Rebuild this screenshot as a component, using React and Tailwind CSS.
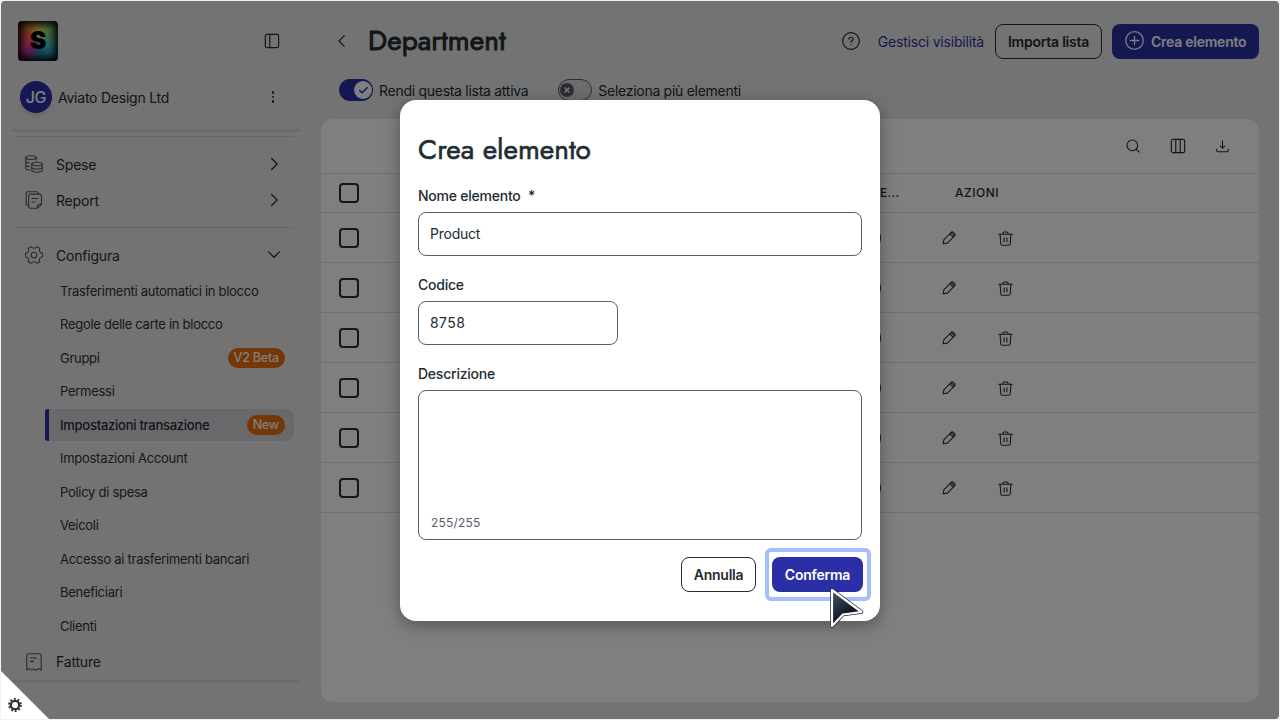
import { Search, Check, X } from "lucide-react";

const configura = [
  { label: "Trasferimenti automatici in blocco" },
  { label: "Regole delle carte in blocco" },
  { label: "Gruppi", badge: "V2 Beta" },
  { label: "Permessi" },
  { label: "Impostazioni transazione", badge: "New", attivo: true },
  { label: "Impostazioni Account" },
  { label: "Policy di spesa" },
  { label: "Veicoli" },
  { label: "Accesso ai trasferimenti bancari" },
  { label: "Beneficiari" },
  { label: "Clienti" },
];

const righe = [1, 2, 3, 4, 5, 6];

function Svg({ size = 18, className = "", sw = 1.2, children }) {
  return (
    <svg
      width={size}
      height={size}
      viewBox="0 0 18 18"
      fill="none"
      stroke="currentColor"
      strokeWidth={sw}
      strokeLinecap="round"
      strokeLinejoin="round"
      className={`shrink-0 ${className}`}
    >
      {children}
    </svg>
  );
}

function IconSpese() {
  return (
    <Svg className="text-[#50535a]" sw={1.1}>
      <ellipse cx="6" cy="2.6" rx="5.2" ry="1.9" />
      <path d="M.8 2.6v10.6c0 .9 1.6 1.6 4 1.8M.8 6.2c0 .8 1.3 1.5 3.6 1.8M.8 9.8c0 .8 1.3 1.5 3.6 1.8M11.2 2.6v2.6" />
      <ellipse cx="12" cy="9" rx="5.2" ry="1.8" />
      <path d="M6.8 9v6.3c0 1 2.3 1.9 5.2 1.9s5.2-.9 5.2-1.9V9M6.8 12.2c0 1 2.3 1.8 5.2 1.8s5.2-.8 5.2-1.8" />
    </Svg>
  );
}

function IconReport() {
  return (
    <Svg className="text-[#50535a]" sw={1.1}>
      <path d="M3.6 14.5H3A1.8 1.8 0 0 1 1.2 12.7V2.5A1.8 1.8 0 0 1 3 .7h8.6a1.8 1.8 0 0 1 1.8 1.8v.6" />
      <path d="M12.3 17.3H5.4a1.8 1.8 0 0 1-1.8-1.8V4.9a1.8 1.8 0 0 1 1.8-1.8h9.3a1.8 1.8 0 0 1 1.8 1.8v8.3zM12.3 17.3v-2.9c0-.7.5-1.2 1.2-1.2h3M7 7.5h6M7 11h3" />
    </Svg>
  );
}

function IconConfigura() {
  return (
    <Svg className="text-[#50535a]" sw={1.1}>
      <circle cx="9" cy="9" r="2.8" />
      <path d="M17.4 7.2Q13.5 6.4 14.75 2.6Q13.8 1 11.65.8Q9 3.8 6.35.8Q4.2 1 3.25 2.6Q4.5 6.4.6 7.2Q0 9 .6 10.8Q4.5 11.6 3.25 15.4Q4.2 17 6.35 17.2Q9 14.2 11.65 17.2Q13.8 17 14.75 15.4Q13.5 11.6 17.4 10.8Q18 9 17.4 7.2z" />
    </Svg>
  );
}

function IconFatture() {
  return (
    <Svg className="text-[#50535a]" sw={1.1}>
      <path d="M1.8 17V2.2A1.5 1.5 0 0 1 3.3.7h11.4a1.5 1.5 0 0 1 1.5 1.5V17c-.9 0-1.5-1.5-2.5-1.5-1.1 0-1.1 1.7-2.3 1.7s-1.3-1.2-2.4-1.2-1.2 1.2-2.4 1.2-1.3-1.7-2.3-1.7S2.7 17 1.8 17zM5.5 5h6M5.5 8.4h3" />
    </Svg>
  );
}

function Badge({ children }) {
  return (
    <span className="flex h-5 items-center rounded-full bg-[#ea6e0c] px-[6px] pt-px text-[12.5px] font-medium tracking-[-0.2px] text-white">
      {children}
    </span>
  );
}

function Voce({ icon, label, freccia }) {
  return (
    <div className="flex h-9 items-center pr-[19px] pl-[24px]">
      {icon}
      <span className="ml-[13px] flex-1 text-[14px] tracking-[-0.2px]">{label}</span>
      {freccia === "destra" && (
        <Svg size={14} sw={1.7}>
          <path d="M6 2l7 7-7 7" />
        </Svg>
      )}
      {freccia === "giu" && (
        <Svg size={14} sw={1.7}>
          <path d="M2 5l7 7 7-7" />
        </Svg>
      )}
    </div>
  );
}

function Sidebar() {
  return (
    <aside className="flex w-[299px] flex-col">
      <div className="mt-[20px] flex h-10 items-center justify-between pr-[20px] pl-[17px]">
        <div className="flex size-10 items-center justify-center overflow-hidden rounded-[4px] bg-[conic-gradient(from_0deg,#f4e45a,#6fe090_70deg,#45c5e8_120deg,#2b8fc0_170deg,#c03aa0_220deg,#ff4a80_260deg,#f8703a_310deg,#f4e45a)] shadow-[inset_0_0_9px_4px_#000]">
          <span className="mb-px font-[Inter,sans-serif] text-[25px] leading-none font-black text-black">
            S
          </span>
        </div>
        <Svg size={16} sw={1.3}>
          <rect x="1.5" y="1.5" width="15" height="15" rx="2" />
          <path d="M6.5 1.5v15" />
        </Svg>
      </div>

      <div className="mt-[20px] flex h-8 items-center pr-[24px] pl-[19px]">
        <div className="flex size-8 items-center justify-center rounded-full bg-[#2b2fa5] text-[16px] font-medium tracking-[-0.3px] text-white shadow-md">
          JG
        </div>
        <span className="ml-[6px] flex-1 text-[14px] tracking-[-0.23px]">
          Aviato Design Ltd
        </span>
        <div className="flex flex-col gap-[2px] pr-[2px]">
          <i className="size-[2.5px] rounded-full bg-current" />
          <i className="size-[2.5px] rounded-full bg-current" />
          <i className="size-[2.5px] rounded-full bg-current" />
        </div>
      </div>

      <div className="mt-[16px] ml-[11px] h-[3px] bg-[#d8d8d9]" />
      <div className="mt-[4px] mr-[6px] ml-[14px] h-px bg-[#cbccce]" />
      <div className="mt-[9px]">
        <Voce icon={<IconSpese />} label="Spese" freccia="destra" />
        <Voce icon={<IconReport />} label="Report" freccia="destra" />
      </div>
      <div className="mt-[9px] mr-[6px] ml-[14px] h-px bg-[#cbccce]" />
      <div className="mt-[9px] mb-px">
        <Voce icon={<IconConfigura />} label="Configura" freccia="giu" />
      </div>
      <div className="mb-px">
        {configura.map((v) => (
          <div key={v.label} className="flex h-[33.5px] items-center pr-[6px] pl-[44px]">
            <div
              className={`flex h-8 flex-1 items-center justify-between rounded-l-[3px] rounded-r-[8px] border-l-4 pr-[9px] pl-[11px] text-[13px] ${
                v.attivo
                  ? "border-[#2b2fa5] bg-[#d3d3d8] font-medium tracking-[-0.26px] text-[#222c33]"
                  : "border-transparent tracking-[-0.28px] text-[#2c3138]"
              }`}
            >
              <span className="pt-[1.5px]">{v.label}</span>
              {v.badge && <Badge>{v.badge}</Badge>}
            </div>
          </div>
        ))}
      </div>
      <Voce icon={<IconFatture />} label="Fatture" />
      <div className="ml-[11px] h-[3px] bg-[#d8d8d9]" />
    </aside>
  );
}

function Checkbox() {
  return <span className="size-5 rounded-[4px] border-2 border-[#222c33]" />;
}

function Intestazione() {
  return (
    <header>
      <div className="mt-[23px] flex h-[35px] items-center tracking-[-0.2px]">
        <Svg size={14} sw={1.5} className="mb-[2px] ml-[14px]">
          <path d="M12 2L5 9l7 7" />
        </Svg>
        <h1 className="ml-[19px] flex-1 pb-[2px] font-[Jost,Lato,sans-serif] text-[28px] leading-none font-normal tracking-[0.1px] [-webkit-text-stroke:0.9px_#222c33]">
          Department
        </h1>
        <Svg size={18} sw={1.2} className="mb-[2px]">
          <circle cx="9" cy="9" r="8.3" />
          <path d="M7 7.2c0-2.7 4.1-2.5 4.1 0 0 1.5-2.1 1.5-2.1 3.1M9 12.8v.2" />
        </Svg>
        <span className="ml-[18px] text-[14px] text-[#2b2fa5]">Gestisci visibilità</span>
        <button className="ml-[11px] h-[35px] w-[107px] rounded-[8px] border border-[#222c33] text-[14px] font-semibold tracking-[-0.23px]">
          Importa lista
        </button>
        <button className="ml-[10px] flex h-[35px] w-[147px] items-center rounded-[8px] bg-[#2b2fa5] pl-[13px] text-[14px] font-semibold tracking-[-0.25px] text-white">
          <Svg size={19} sw={1.2} className="mr-[7px] mb-[2px]">
            <circle cx="9" cy="9" r="8.3" />
            <path d="M9 5v8M5 9h8" />
          </Svg>
          Crea elemento
        </button>
      </div>

      <div className="mt-[20px] flex h-[22px] items-center text-[14px] tracking-[-0.28px]">
        <span className="ml-[18px] flex h-[22px] w-[34px] items-center justify-end rounded-full bg-[#2b2fa5] pr-px">
          <span className="flex size-[18px] items-center justify-center rounded-full bg-white text-[#2b2fa5]">
            <Check size={11} strokeWidth={3.5} />
          </span>
        </span>
        <span className="ml-[6px]">Rendi questa lista attiva</span>
        <span className="ml-[30px] flex h-[22px] w-[34px] items-center rounded-full border border-[#5b5d68] bg-[#d9d9dd] pl-px">
          <span className="flex size-[14px] items-center justify-center rounded-full bg-[#5b5d68] text-white">
            <X size={8} strokeWidth={4} />
          </span>
        </span>
        <span className="ml-[6px]">Seleziona più elementi</span>
      </div>
    </header>
  );
}

function Tabella() {
  return (
    <section className="mt-[18px] h-[583px] w-[938px] rounded-[12px] bg-white">
      <div className="flex h-[54px] items-center justify-end gap-[29px] pr-[29px]">
        <Search size={16} strokeWidth={1.6} />
        <Svg size={16} sw={1.3}>
          <rect x="1.5" y="1.5" width="15" height="15" rx="2" />
          <path d="M6.5 1.5v15M11.5 1.5v15" />
        </Svg>
        <Svg size={15} sw={1.3}>
          <path d="M9 2v8.5M6.5 8.5L9 11l2.5-2.5M2 12v1.5c0 1 .7 1.7 1.7 1.7h10.6c1 0 1.7-.7 1.7-1.7V12" />
        </Svg>
      </div>
      <div className="flex h-[40px] items-center border-y border-[#e0e0e2] text-[12px] font-medium">
        <div className="flex w-[559px] pl-[18px]">
          <Checkbox />
        </div>
        <span className="w-[75px] tracking-[0.3px]">E...</span>
        <span className="tracking-[0.5px]">AZIONI</span>
      </div>
      {righe.map((r) => (
        <div key={r} className="flex h-[50px] items-center border-b border-[#e0e0e2]">
          <div className="flex flex-1 pl-[18px]">
            <Checkbox />
          </div>
          <span className="h-[22px] w-[34px] rounded-full bg-[#2b2fa5]" />
          <Svg size={14} sw={1.4} className="ml-[61px]">
            <path d="M1.5 16.5l.9-5.2 9-9.2c1.1-1.1 2.4-1.2 3.5-.1l1.1 1.1c1.1 1.1 1 2.4-.1 3.5l-9.1 9zM10 3.8L14.2 8M11.8 2l4.2 4.2" />
          </Svg>
          <Svg size={15} sw={1.3} className="mt-px mr-[246px] ml-[42px]">
            <path d="M1 3.8h16M6 3.8V2.5c0-.8.5-1.3 1.3-1.3h3.4c.8 0 1.3.5 1.3 1.3v1.3M2.5 3.8l.8 11.5c.1 1 .8 1.7 1.8 1.7h7.8c1 0 1.7-.7 1.8-1.7l.8-11.5M7.3 8v5M10.7 8v5" />
          </Svg>
        </div>
      ))}
    </section>
  );
}

function ModaleCrea() {
  return (
    <div className="relative flex h-[521px] w-[480px] flex-col rounded-[16px] bg-white px-[18px] text-[14px] tracking-[-0.23px] text-[#222c33] shadow-[0_4px_16px_rgba(0,0,0,0.35)]">
      <h2 className="mt-[35px] h-[30px] font-[Jost,Lato,sans-serif] text-[28px] leading-[30px] font-normal tracking-normal [-webkit-text-stroke:0.6px_#222c33]">
        Crea elemento
      </h2>
      <label className="mt-[21px] h-5 leading-5 font-medium">
        Nome elemento <span className="ml-1">*</span>
      </label>
      <input
        defaultValue="Product"
        className="mt-[6px] h-[44px] rounded-[8px] border border-[#5b5d68] px-[11px] pb-[2px]"
      />
      <label className="mt-[19px] h-5 leading-5 font-medium">Codice</label>
      <input
        defaultValue="8758"
        className="mt-[6px] h-[44px] w-[200px] rounded-[8px] border border-[#5b5d68] px-[11px] pb-[2px] tracking-[0.4px]"
      />
      <label className="mt-[19px] h-5 leading-5 font-medium">Descrizione</label>
      <div className="mt-[6px] flex h-[150px] items-end rounded-[8px] border border-[#5b5d68] px-[12px] pb-[8px] text-[12px] leading-4 tracking-[0.2px] text-[#5b5d68]">
        255/255
      </div>
      <div className="mt-[17px] -mr-px flex justify-end gap-4 font-semibold">
        <button className="h-[35px] w-[75px] rounded-[8px] border border-[#222c33]">
          Annulla
        </button>
        <button className="relative h-[35px] w-[91px] rounded-[8px] bg-[#2b2fa5] text-white">
          Conferma
          <span className="absolute -inset-y-[9px] -right-[8px] -left-[7px] rounded-[6px] border-4 border-[#a5bcff]" />
        </button>
      </div>
      <svg className="absolute top-[487px] left-[429px]" width="36" height="44" viewBox="0 0 36 44">
        <defs>
          <linearGradient id="freccia" x1="0" y1="0" x2="0.6" y2="1">
            <stop offset="0" stopColor="#4a5368" />
            <stop offset="0.7" stopColor="#11182a" />
          </linearGradient>
        </defs>
        <path
          d="M3 3v36l11-11.5 18.5-2.5z"
          fill="url(#freccia)"
          stroke="#1c2233"
          strokeWidth="3.6"
          strokeLinejoin="round"
        />
        <path
          d="M3 3v36l11-11.5 18.5-2.5z"
          fill="url(#freccia)"
          stroke="#fff"
          strokeWidth="2.2"
          strokeLinejoin="round"
        />
      </svg>
    </div>
  );
}

export default function App() {
  return (
    <div className="relative h-[720px] w-[1280px] overflow-hidden bg-[#eff3f3] p-px font-[Inter,sans-serif] text-[#222c33]">
      <div className="flex h-[718px] w-[1278px] overflow-hidden rounded-[4px] bg-[#e7e7e7]">
        <Sidebar />
        <main className="ml-[21px] w-[938px]">
          <Intestazione />
          <Tabella />
        </main>
      </div>

      <div className="absolute inset-px flex items-center justify-center rounded-[4px] bg-black/50 pt-px">
        <ModaleCrea />
      </div>

      <div className="absolute bottom-px left-px flex h-[48px] w-[48px] items-end bg-white pb-[7px] pl-[7px] [clip-path:polygon(0_0,100%_100%,0_100%)]">
        <svg width="14" height="14" viewBox="0 0 14 14" fill="none" stroke="#2f3237">
          <circle cx="7" cy="7" r="4.2" strokeWidth="2.2" />
          <circle cx="7" cy="7" r="6" strokeWidth="1.8" strokeDasharray="1.9 1.87" />
        </svg>
      </div>
    </div>
  );
}
